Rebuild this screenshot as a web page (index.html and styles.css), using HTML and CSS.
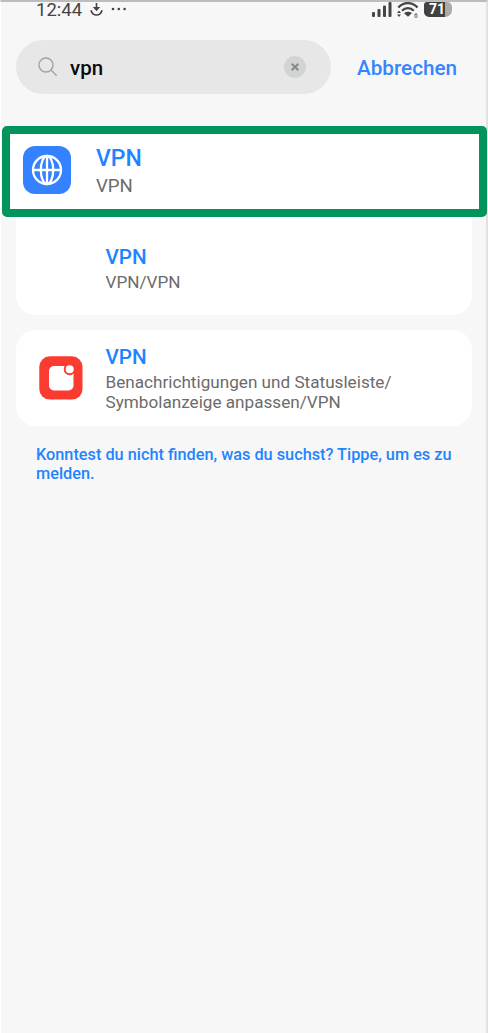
FILE: index.html
```html
<!DOCTYPE html>
<html lang="de">
<head>
<meta charset="utf-8">
<title>Einstellungen – Suche</title>
<link rel="stylesheet" href="styles.css">
</head>
<body>
<main class="screen">
  <header class="status">
    <span class="clock">12:44</span>
    <svg class="download" width="13" height="15" viewBox="0 0 13 15" fill="none" stroke="#444" stroke-width="1.6"><path d="M6.500 1v7M1 8.200c.8 3.200 2.700 4.800 5.500 4.800s4.700-1.600 5.500-4.800"/><path d="M2.800 5h7.400L6.500 9.300z" fill="#444" stroke="none"/></svg>
    <svg class="dots" width="16" height="4" viewBox="0 0 16 4" fill="#444"><circle cx="2" cy="2" r="1.300"/><circle cx="7.800" cy="2" r="1.300"/><circle cx="13.600" cy="2" r="1.300"/></svg>
    <svg class="signal" width="20" height="16" viewBox="0 0 20 16" fill="#444"><rect x="0" y="10" width="3" height="5" rx="1"/><rect x="5.500" y="7" width="3" height="8" rx="1"/><rect x="11" y="3.500" width="3" height="11.500" rx="1"/><rect x="16.500" y="0" width="3" height="15" rx="1"/></svg>
    <svg class="wifi" width="22" height="17" viewBox="0 0 22 17"><g fill="none" stroke="#444" stroke-width="2.300"><path d="M1.300 5.500C6.500-.3 15.300-.3 20.500 5.500"/><path d="M5 8.800c3.500-3.500 8.300-3.500 11.800 0"/></g><path d="M7 11.200c2.300-1.800 5.600-1.800 7.900 0L11 14.800zM0 11l2-2.500L4 11zM0 12.500h4L2 15z" fill="#444"/><text class="wifi-gen" x="17" y="16">6</text></svg>
    <div class="battery"><span class="level">71</span></div>
  </header>

  <section class="search">
    <div class="field">
      <svg class="lens" width="20" height="20" viewBox="0 0 20 20" fill="none" stroke="#a2a2a2" stroke-width="1.400"><circle cx="8" cy="8" r="7"/><path d="M13 13l5.700 5.700"/></svg>
      <span class="query">vpn</span>
      <svg class="clear" width="22" height="22" viewBox="0 0 22 22"><circle cx="11" cy="11" r="11" fill="#d2d3d3"/><path d="M7.700 7.700l6.600 6.600M14.300 7.700l-6.600 6.600" stroke="#888" stroke-width="2"/></svg>
    </div>
    <span class="cancel">Abbrechen</span>
  </section>

  <section class="results">
    <article class="highlight">
      <svg class="icon-globe" width="48" height="48" viewBox="0 0 48 48"><rect width="48" height="48" rx="12" fill="#3482ff"/><g fill="none" stroke="#fff" stroke-width="2.300"><circle cx="24" cy="24" r="14"/><ellipse cx="24" cy="24" rx="6.200" ry="14"/><path d="M24 10v28M10 24h28"/></g></svg>
      <div class="highlight-text">
        <h2 class="title title-large">VPN</h2>
        <p class="path path-large">VPN</p>
      </div>
    </article>
    <article class="card card-joined">
      <h2 class="title">VPN</h2>
      <p class="path">VPN/VPN</p>
    </article>
    <article class="card card-notify">
      <svg class="icon-notify" width="44" height="44" viewBox="0 0 44 44"><rect x=".3" y=".3" width="43.200" height="43.200" rx="10.500" fill="#fb3b2f"/><rect x="10" y="10" width="24.500" height="24.500" rx="5" fill="#fff"/><circle cx="30.700" cy="13.300" r="5" fill="#fff" stroke="#fb3b2f" stroke-width="1.900"/></svg>
      <div>
        <h2 class="title">VPN</h2>
        <p class="path">Benachrichtigungen und Statusleiste/<br>Symbolanzeige anpassen/VPN</p>
      </div>
    </article>
    <p class="feedback">Konntest du nicht finden, was du suchst? Tippe, um es zu<br>melden.</p>
  </section>
</main>
</body>
</html>
```
FILE: styles.css
```css
* { box-sizing: border-box; }
body { margin: 0; background: #f7f7f7; font-family: Roboto, "Liberation Sans", sans-serif; }
h2, p { margin: 0; }
svg { display: block; flex: none; }

.screen {
  width: 488px;
  height: 1033px;
  background: #f7f7f7;
  border-top: 2px solid #bdbdbd;
  border-left: 1px solid #fff;
  border-right: 2px solid #e2e2e2;
}

.status { display: flex; align-items: flex-start; height: 38px; padding-left: 35px; color: #444; }
.clock { width: 47px; font-size: 18.500px; line-height: 16px; white-space: nowrap; }
.download { margin-left: 7px; }
.dots { margin: 5px 0 0 8px; }
.signal { margin-left: 245px; }
.wifi { margin-left: 5px; }
.wifi-gen { font: 700 6.500px Roboto, sans-serif; fill: #777; }
.battery { width: 28px; height: 15px; margin-left: 5px; background: linear-gradient(90deg, #414141 21px, #aaa 21px); border-radius: 3px 5px 7px 5px; }
.level { display: block; width: 26px; font-size: 14px; font-weight: 700; line-height: 15px; text-align: center; color: #fff; }

.search { display: flex; align-items: center; height: 54px; padding-left: 15px; }
.field { display: flex; align-items: center; width: 315px; height: 54px; padding: 0 25px 0 22px; border-radius: 27px; background: #e7e7e7; }
.query { margin-left: 12px; padding-top: 2px; font-size: 20.500px; font-weight: 500; line-height: 24px; color: #0b0b0b; }
.clear { margin-left: auto; }
.cancel { margin-left: 26px; padding-top: 2px; font-size: 20.700px; font-weight: 500; line-height: 26px; color: #3485ff; }

.results { padding-top: 32px; }
.highlight {
  position: relative;
  display: flex;
  align-items: center;
  width: 485px;
  height: 91px;
  margin-left: 1px;
  padding-left: 13px;
  padding-bottom: 3px;
  border: 8px solid #03945b;
  border-radius: 5px;
  background: #fff;
}
.highlight-text { margin-left: 25px; padding-top: 5px; }
.title { font-size: 20.700px; font-weight: 500; line-height: 25px; color: #1f84ff; }
.title-large { font-size: 23px; line-height: 28px; }
.path { padding-top: 2px; font-size: 17.150px; line-height: 20px; color: #6b6b6b; white-space: nowrap; }
.path-large { padding-top: 0; font-size: 18.600px; line-height: 27px; }
.card { width: 456px; margin-left: 15px; background: #fff; }
.card-joined { height: 98px; padding: 28px 0 0 89.500px; border-radius: 0 0 20px 20px; }
.card-notify { display: flex; align-items: flex-start; height: 95.500px; margin-top: 15px; padding: 15px 0 0 23px; border-radius: 20px; }
.icon-notify { margin: 11px 22.500px 0 0; }
.feedback { padding: 19.500px 0 0 35px; font-size: 16.300px; font-weight: 500; line-height: 19px; color: #1f84ff; white-space: nowrap; }
```
